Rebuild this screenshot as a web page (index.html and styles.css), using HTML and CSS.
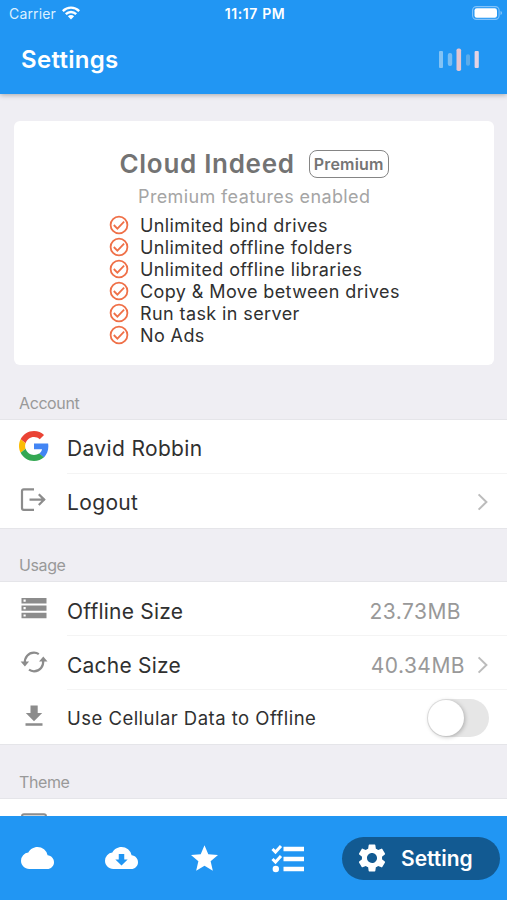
FILE: index.html
```html
<!DOCTYPE html>
<html lang="en">
<head>
<meta charset="utf-8">
<title>Settings</title>
<link rel="stylesheet" href="styles.css">
</head>
<body>
<header class="header">
  <div class="status">
    <div class="carrier"><span class="carrier-name">Carrier</span>
      <svg class="wifi" viewBox="0 0 18 14" width="18" height="14" fill="none" stroke="#fff" stroke-width="2.4"><path d="M.8 5.1C5.5.5 12.5.5 17.2 5.1M3.8 8.2c3-2.9 7.4-2.9 10.4 0"/><path d="M5.9 10.3c1.8-1.7 4.4-1.7 6.2 0L9 13.5z" fill="#fff" stroke="none"/></svg>
    </div>
    <span class="time">11:17 PM</span>
    <svg class="battery" viewBox="0 0 31 14" width="31" height="14"><rect x=".6" y=".6" width="26.5" height="12.8" rx="3.8" fill="none" stroke="#82c3fa" stroke-width="1.1"/><rect x="2.5" y="2.3" width="22.5" height="9.4" rx="2.2" fill="#fff"/><path d="M28.5 5v4q1.6-.6 1.6-2t-1.6-2z" fill="#82c3fa"/></svg>
  </div>
  <div class="titlebar">
    <h1 class="title">Settings</h1>
    <svg class="wave" viewBox="0 0 40 24" width="40" height="24"><rect y="3" width="4" height="17" rx="1" fill="#83c3f5"/><rect x="8.8" y="5" width="4.4" height="13" rx="2" fill="#79bdf3"/><rect x="17.5" y=".5" width="4.6" height="22.5" rx="1.8" fill="#e5c5cf"/><rect x="27" y="6.3" width="4" height="11.5" rx="1.8" fill="#5caceb"/><rect x="35.6" y="3" width="4.2" height="17" rx="1" fill="#e4d3e4"/></svg>
  </div>
</header>
<main class="content">
  <section class="card">
    <div class="brand"><h2 class="brand-name">Cloud Indeed</h2><span class="badge">Premium</span></div>
    <p class="subtitle">Premium features enabled</p>
    <ul class="features">
      <li class="feature"><svg class="check" viewBox="0 0 20 20"><circle cx="10" cy="10" r="8.4"/><path d="m4.8 10 3.6 3.7 6.7-7"/></svg><span>Unlimited bind drives</span></li>
      <li class="feature"><svg class="check" viewBox="0 0 20 20"><circle cx="10" cy="10" r="8.4"/><path d="m4.8 10 3.6 3.7 6.7-7"/></svg><span>Unlimited offline folders</span></li>
      <li class="feature"><svg class="check" viewBox="0 0 20 20"><circle cx="10" cy="10" r="8.4"/><path d="m4.8 10 3.6 3.7 6.7-7"/></svg><span>Unlimited offline libraries</span></li>
      <li class="feature"><svg class="check" viewBox="0 0 20 20"><circle cx="10" cy="10" r="8.4"/><path d="m4.8 10 3.6 3.7 6.7-7"/></svg><span>Copy &amp; Move between drives</span></li>
      <li class="feature"><svg class="check" viewBox="0 0 20 20"><circle cx="10" cy="10" r="8.4"/><path d="m4.8 10 3.6 3.7 6.7-7"/></svg><span>Run task in server</span></li>
      <li class="feature"><svg class="check" viewBox="0 0 20 20"><circle cx="10" cy="10" r="8.4"/><path d="m4.8 10 3.6 3.7 6.7-7"/></svg><span>No Ads</span></li>
    </ul>
  </section>
  <h3 class="group-title">Account</h3>
  <section class="group">
    <div class="row">
      <svg class="icon google" viewBox="0 0 48 48" width="30" height="30"><path fill="#EA4335" d="M24 9.5c3.54 0 6.71 1.22 9.21 3.6l6.85-6.85C35.9 2.38 30.47 0 24 0 14.62 0 6.51 5.38 2.56 13.22l7.98 6.19C12.43 13.72 17.74 9.5 24 9.5z"/><path fill="#4285F4" d="M46.98 24.55c0-1.57-.15-3.09-.38-4.55H24v9.02h12.94c-.58 2.96-2.26 5.48-4.78 7.18l7.73 6c4.51-4.18 7.09-10.36 7.09-17.65z"/><path fill="#FBBC05" d="M10.53 28.59c-.48-1.45-.76-2.99-.76-4.59s.27-3.14.76-4.59l-7.98-6.19C.92 16.46 0 20.12 0 24s.92 7.54 2.56 10.78l7.97-6.19z"/><path fill="#34A853" d="M24 48c6.48 0 11.93-2.13 15.89-5.81l-7.73-6c-2.15 1.45-4.92 2.3-8.16 2.3-6.26 0-11.57-4.22-13.47-9.91l-7.98 6.19C6.51 42.62 14.62 48 24 48z"/></svg>
      <div class="cell"><span class="label name">David Robbin</span></div>
    </div>
    <div class="row">
      <svg class="icon" viewBox="0 0 30 26" width="30" height="26" fill="none" stroke="#8c8c8c" stroke-width="2.2"><path d="M15 2.3H4.8Q3 2.3 3 4.1v17Q3 22.9 4.8 22.9H15"/><path d="M10.5 12.6H26M19.8 7.2l5.4 5.4-5.4 5.4"/></svg>
      <div class="cell"><span class="label">Logout</span><svg class="chevron" viewBox="0 0 12 18"><path d="m1.6 1.4 7.8 7.6-7.8 7.6"/></svg></div>
    </div>
  </section>
  <h3 class="group-title usage-title">Usage</h3>
  <section class="group usage">
    <div class="row">
      <svg class="icon" viewBox="0 0 30 22" width="30" height="22"><path fill="#8c8c8c" d="M2.5 1h25v5.4h-25zM2.5 8.4h25v5.4h-25zM2.5 15.8h25v5.4h-25z"/><path fill="#fff" d="M4.5 2.6h2.2v2.2H4.5zM4.5 10h2.2v2.2H4.5zM4.5 17.4h2.2v2.2H4.5z"/></svg>
      <div class="cell"><span class="label tight">Offline Size</span><span class="value solo">23.73MB</span></div>
    </div>
    <div class="row">
      <svg class="icon" viewBox="0 0 30 24" width="30" height="24" fill="none" stroke="#8c8c8c" stroke-width="2.2"><path d="M5.8 13.5C5.4 7 9.5 2.7 15 2.7c2 0 3.4.5 4.8 1.5M24.2 9.5C24.8 16.5 21 21.3 15 21.3c-2 0-3.5-.5-5-1.6"/><path fill="#8c8c8c" stroke="none" d="M1.6 11.5h8.5l-4.2 5zM20 11.5h8.5l-4.2-5z"/></svg>
      <div class="cell"><span class="label tight">Cache Size</span><span class="value">40.34MB</span><svg class="chevron" viewBox="0 0 12 18"><path d="m1.6 1.4 7.8 7.6-7.8 7.6"/></svg></div>
    </div>
    <div class="row">
      <svg class="icon" viewBox="0 0 30 24" width="30" height="24" fill="#8c8c8c"><path d="M11.5 1.5h7.2v7.4h4.5L15 17.2 6.8 8.9h4.7zM6.5 19.3h17v2.5h-17z"/></svg>
      <div class="cell"><span class="label cellular">Use Cellular Data to Offline</span><span class="switch"><span class="knob"></span></span></div>
    </div>
  </section>
  <h3 class="group-title">Theme</h3>
  <section class="group theme"><svg viewBox="0 0 28 20" width="28" height="20"><rect x="2" y="1.3" width="24" height="18" rx="2" fill="#e8e8e8" stroke="#8c8c8c" stroke-width="2"/></svg></section>
</main>
<nav class="nav">
  <span class="tab"><svg viewBox="0 4 24 16" width="33" height="22" fill="#fff"><path d="M19.35 10.04A7.49 7.49 0 0 0 12 4C9.11 4 6.6 5.64 5.35 8.04A5.994 5.994 0 0 0 0 14c0 3.31 2.69 6 6 6h13c2.76 0 5-2.24 5-5 0-2.64-2.05-4.78-4.65-4.96z"/></svg></span>
  <span class="tab"><svg viewBox="0 4 24 16" width="33" height="22" fill="#fff"><path fill-rule="evenodd" d="M19.35 10.04A7.49 7.49 0 0 0 12 4C9.11 4 6.6 5.64 5.35 8.04A5.994 5.994 0 0 0 0 14c0 3.31 2.69 6 6 6h13c2.76 0 5-2.24 5-5 0-2.64-2.05-4.78-4.65-4.96zM10 9h4v4h2.5L12 17.5 7.5 13H10z"/></svg></span>
  <span class="tab star"><svg viewBox="2 2 20 19" width="27" height="26" fill="#fff"><path d="M12 17.27 18.18 21l-1.64-7.03L22 9.24l-7.19-.61L12 2 9.19 8.63 2 9.24l5.46 4.73L5.82 21z"/></svg></span>
  <span class="tab list"><svg viewBox="0 0 34 29" width="34" height="29"><g fill="none" stroke="#fff"><path d="m1.5 5 3 3L10 2M1.5 15l3 3 5.5-6" stroke-width="3"/><path d="M12.5 5H33M12.5 15H33M12.5 25H33" stroke-width="4.5"/></g><circle cx="4.8" cy="25" r="3.2" fill="#fff"/></svg></span>
  <span class="tab-active"><svg viewBox="2 2 20 20" width="28" height="28" fill="#fff"><path d="M19.14 12.94c.04-.3.06-.61.06-.94 0-.32-.02-.64-.07-.94l2.03-1.58a.49.49 0 0 0 .12-.61l-1.92-3.32a.488.488 0 0 0-.59-.22l-2.39.96c-.5-.38-1.03-.7-1.62-.94l-.36-2.54a.484.484 0 0 0-.48-.41h-3.84c-.24 0-.43.17-.47.41l-.36 2.54c-.59.24-1.13.57-1.62.94l-2.39-.96c-.22-.08-.47 0-.59.22L2.74 8.87c-.12.21-.08.47.12.61l2.03 1.58c-.05.3-.09.63-.09.94s.02.64.07.94l-2.03 1.58a.49.49 0 0 0-.12.61l1.92 3.32c.12.22.37.29.59.22l2.39-.96c.5.38 1.03.7 1.62.94l.36 2.54c.05.24.24.41.48.41h3.84c.24 0 .44-.17.47-.41l.36-2.54c.59-.24 1.13-.56 1.62-.94l2.39.96c.22.08.47 0 .59-.22l1.92-3.32c.12-.22.07-.47-.12-.61zM12 15.6A3.61 3.61 0 0 1 8.4 12c0-1.98 1.62-3.6 3.6-3.6s3.6 1.62 3.6 3.6-1.62 3.6-3.6 3.6z"/></svg><span>Setting</span></span>
</nav>
</body>
</html>
```
FILE: styles.css
```css
* { box-sizing: border-box; margin: 0; padding: 0; }
body { height: 900px; display: flex; flex-direction: column; overflow: hidden; background: #efeef3; color: #303030; font-family: Inter, "Liberation Sans", sans-serif; white-space: nowrap; }
svg { display: block; flex: none; }
.header { flex: none; height: 94px; background: #2196f3; color: #fff; box-shadow: 0 1px 5px rgba(0,0,0,.3); z-index: 1; }
.status { height: 28px; padding: 0 6px 2px 9px; display: grid; grid-template-columns: 1fr auto 1fr; align-items: center; }
.carrier { display: flex; gap: 6px; align-items: center; font-size: 14px; letter-spacing: .15px; color: #dcf0ff; }
.wifi { margin-top: -1px; }
.time { font-size: 14px; font-weight: 600; letter-spacing: .6px; }
.battery { justify-self: end; margin-right: -2px; }
.titlebar { height: 64px; padding: 0 28px 0 21px; display: flex; align-items: center; justify-content: space-between; }
.title { font-size: 24px; font-weight: 600; line-height: 30px; letter-spacing: .3px; }
.content { flex: 1; min-height: 0; overflow: hidden; }
.card { margin: 27px 13px 0 14px; height: 244px; padding-top: 25px; border-radius: 6px; background: #fff; }
.brand { display: flex; align-items: center; margin-left: 105.5px; gap: 14px; height: 35px; }
.brand-name { font-size: 26px; font-weight: 600; letter-spacing: .7px; color: #737373; }
.badge { height: 28px; width: 80px; border: 1.5px solid #858585; border-radius: 8px; display: flex; align-items: center; justify-content: center; font-size: 16px; font-weight: 600; letter-spacing: .2px; color: #757575; }
.subtitle { margin-left: 124px; height: 33px; line-height: 32px; font-size: 18px; letter-spacing: .38px; color: #a5a5a5; }
.features { list-style: none; margin-left: 95px; }
.feature { display: flex; align-items: center; gap: 11px; height: 22px; font-size: 18px; letter-spacing: .4px; }
.check { width: 20px; height: 20px; fill: none; stroke: #ef7048; stroke-width: 1.8; }
.group-title { height: 55px; padding: 28px 0 0 19px; line-height: 20px; font-size: 16px; font-weight: 400; letter-spacing: -.4px; color: #999; }
.usage-title { height: 54px; padding-top: 27px; }
.group { background: #fff; box-shadow: 0 0 0 1px #e5e5e9; }
.row { height: 54px; display: flex; }
.icon { margin: 0 18px 0 19px; align-self: center; position: relative; top: -1px; }
.cell { flex: 1; display: flex; align-items: center; padding: 4px 18px 0 0; border-bottom: 1px solid #f4f4f4; }
.row:last-child .cell { border-bottom: 0; padding-top: 2px; }
.usage .cell { padding-top: 5px; }
.label { flex: 1; font-size: 21px; letter-spacing: .35px; }
.tight { letter-spacing: .22px; }
.cellular { font-size: 18.5px; letter-spacing: .47px; }
.value { font-size: 21px; letter-spacing: .45px; color: #999; margin-right: 12px; }
.solo { margin-right: 28px; }
.chevron { width: 12px; height: 18px; fill: none; stroke: #bcbcbc; stroke-width: 2; }
.switch { width: 62px; height: 38px; border-radius: 19px; background: #e6e6e6; padding: 1px; }
.knob { display: block; width: 36px; height: 36px; border-radius: 50%; background: #fff; box-shadow: 1px 1px 4px rgba(0,0,0,.25); }
.theme { height: 80px; padding: 14px 20px; }
.nav { flex: none; height: 84px; padding: 0 7px 0 21px; display: grid; grid-template-columns: 84px 84px 83px 70px 158px; align-items: center; background: #2196f3; z-index: 1; }
.star { padding-left: 2px; }
.list svg { margin-left: -1px; }
.tab-active { height: 43px; border-radius: 22px; padding-left: 16px; display: flex; align-items: center; gap: 15px; background: #125a92; color: #fff; font-size: 21px; font-weight: 600; letter-spacing: 0; }
```
